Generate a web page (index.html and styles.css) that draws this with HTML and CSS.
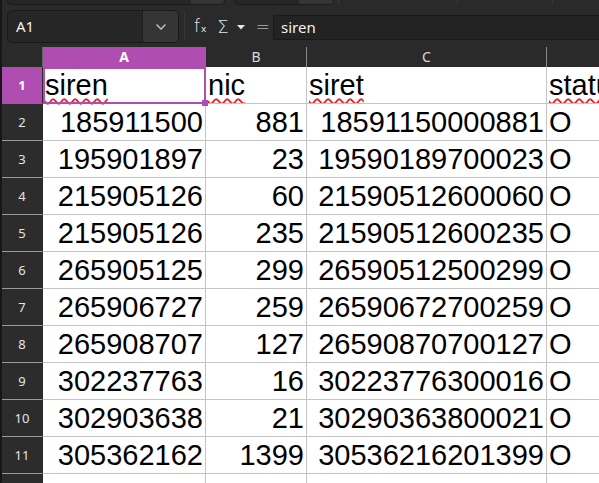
FILE: index.html
```html
<!DOCTYPE html>
<html>
<head>
<meta charset="utf-8">
<link rel="stylesheet" href="styles.css">
</head>
<body>
<div class="app">
  <div class="edge"></div>
  <div class="main">
    <div class="strip">
      <div class="tab tab1"><div class="tabseg seg1"></div></div>
      <div class="tab tab2"><div class="tabseg seg2"></div></div>
      <div class="vsep s1"></div>
      <div class="vsep s2"></div>
      <div class="vsep s3"></div>
    </div>
    <div class="toolbar">
      <div class="namebox">
        <span class="nametext">A1</span>
        <span class="namedrop">
          <svg width="12" height="8" viewBox="0 0 12 8"><path d="M1.5 1.5 L6 6 L10.5 1.5" fill="none" stroke="#c8c8c8" stroke-width="1.3"/></svg>
        </span>
      </div>
      <div class="tsep"></div>
      <div class="icons">
        <span class="fx">f<span class="fxsub">x</span></span>
        <span class="sigma">Σ</span>
        <svg class="tri" width="8" height="5" viewBox="0 0 8 5"><path d="M0 0 L8 0 L4 4.5 Z" fill="#e6e6e6"/></svg>
        <span class="eq">=</span>
      </div>
      <div class="formula">siren</div>
    </div>
    <div class="sheet">
      <div class="hrow">
        <div class="corner"></div>
        <div class="ch ca sel">A</div>
        <div class="ch cb">B</div>
        <div class="ch cc">C</div>
        <div class="ch cd"></div>
      </div>
      <div class="row">
        <div class="rh selrh">1</div>
        <div class="c ca txt cur"><span class="sp">siren</span><span class="handle"></span></div>
        <div class="c cb txt"><span class="sp">nic</span></div>
        <div class="c cc txt"><span class="sp">siret</span></div>
        <div class="c cd txt"><span class="sp">statut</span></div>
      </div>
      <div class="row"><div class="rh">2</div><div class="c ca num">185911500</div><div class="c cb num">881</div><div class="c cc num">18591150000881</div><div class="c cd txt">O</div></div>
      <div class="row"><div class="rh">3</div><div class="c ca num">195901897</div><div class="c cb num">23</div><div class="c cc num">19590189700023</div><div class="c cd txt">O</div></div>
      <div class="row"><div class="rh">4</div><div class="c ca num">215905126</div><div class="c cb num">60</div><div class="c cc num">21590512600060</div><div class="c cd txt">O</div></div>
      <div class="row"><div class="rh">5</div><div class="c ca num">215905126</div><div class="c cb num">235</div><div class="c cc num">21590512600235</div><div class="c cd txt">O</div></div>
      <div class="row"><div class="rh">6</div><div class="c ca num">265905125</div><div class="c cb num">299</div><div class="c cc num">26590512500299</div><div class="c cd txt">O</div></div>
      <div class="row"><div class="rh">7</div><div class="c ca num">265906727</div><div class="c cb num">259</div><div class="c cc num">26590672700259</div><div class="c cd txt">O</div></div>
      <div class="row"><div class="rh">8</div><div class="c ca num">265908707</div><div class="c cb num">127</div><div class="c cc num">26590870700127</div><div class="c cd txt">O</div></div>
      <div class="row"><div class="rh">9</div><div class="c ca num">302237763</div><div class="c cb num">16</div><div class="c cc num">30223776300016</div><div class="c cd txt">O</div></div>
      <div class="row"><div class="rh">10</div><div class="c ca num">302903638</div><div class="c cb num">21</div><div class="c cc num">30290363800021</div><div class="c cd txt">O</div></div>
      <div class="row"><div class="rh">11</div><div class="c ca num">305362162</div><div class="c cb num">1399</div><div class="c cc num">30536216201399</div><div class="c cd txt">O</div></div>
      <div class="row"><div class="rh"></div><div class="c ca num"></div><div class="c cb num"></div><div class="c cc num"></div><div class="c cd txt"></div></div>
    </div>
  </div>
</div>
</body>
</html>
```
FILE: styles.css
```css
html, body {
  margin: 0;
  padding: 0;
  background: #2a2a2a;
  overflow: hidden;
}
.app {
  width: 599px;
  height: 483px;
  display: flex;
  overflow: hidden;
}
.edge {
  width: 2px;
  flex: none;
  background: #1b151b;
}
.main {
  flex: 1;
  min-width: 0;
  display: flex;
  flex-direction: column;
}
.strip {
  height: 5px;
  display: flex;
  flex: none;
}
.tab {
  height: 4px;
  border: 1px solid #1c1c1c;
  border-top: none;
  border-radius: 0 0 5px 5px;
  background: #262626;
  display: flex;
  justify-content: flex-end;
  overflow: hidden;
}
.tab1 { margin-left: 5px; width: 216px; }
.tab2 { margin-left: 9px; width: 98px; }
.tabseg { height: 100%; background: #353535; }
.seg1 { width: 33px; }
.seg2 { width: 34px; }
.vsep { width: 1px; height: 5px; background: #383838; }
.s1 { margin-left: 4px; }
.s2 { margin-left: 118px; }
.s3 { margin-left: 94px; }

.toolbar {
  margin-top: 5px;
  height: 33px;
  display: flex;
  align-items: center;
  flex: none;
}
.namebox {
  margin-left: 5px;
  width: 170px;
  height: 31px;
  border: 1px solid #1a1a1a;
  border-radius: 5px;
  background: #262626;
  display: flex;
  overflow: hidden;
  flex: none;
}
.nametext {
  flex: 1;
  padding-left: 8px;
  font-family: "Noto Sans", sans-serif;
  font-size: 15px;
  line-height: 31px;
  color: #f2f2f2;
}
.namedrop {
  width: 35px;
  background: #353535;
  border-left: 1px solid #1e1e1e;
  display: flex;
  align-items: center;
  justify-content: center;
}
.tsep {
  width: 1px;
  height: 27px;
  margin-left: 5px;
  background: #363636;
  flex: none;
}
.icons {
  display: flex;
  align-items: center;
  margin-left: 9px;
  width: 79px;
  flex: none;
  color: #e6e6e6;
  font-family: "DejaVu Sans", sans-serif;
}
.fx {
  font-family: "DejaVu Sans", sans-serif;
  font-size: 17px;
  font-weight: 200;
  margin-top: -1px;
}
.fxsub {
  font-size: 9px;
  margin-left: 1px;
  font-weight: 400;
}
.sigma {
  margin-left: 11px;
  font-size: 18px;
  font-weight: 200;
  margin-top: -1px;
}
.tri { margin-left: 8px; margin-top: 2px; }
.eq {
  margin-left: 11px;
  font-size: 17px;
  font-weight: 200;
}
.formula {
  flex: 1;
  height: 23px;
  margin-top: 1px;
  border: 1px solid #1a1a1a;
  border-right: none;
  border-radius: 2px 0 0 2px;
  background: #232323;
  padding-left: 7px;
  font-family: "Noto Sans", sans-serif;
  font-size: 15px;
  line-height: 22px;
  color: #f2f2f2;
}

.sheet {
  margin-top: 4px;
  display: flex;
  flex-direction: column;
}
.hrow {
  height: 20px;
  display: flex;
  flex: none;
}
.corner {
  width: 40px;
  border-right: 1px solid #5e6a5e;
  flex: none;
}
.ch {
  flex: none;
  box-sizing: border-box;
  border-right: 1px solid #8a8a8a;
  text-align: center;
  font-family: "Noto Sans", sans-serif;
  font-size: 14px;
  line-height: 20px;
  color: #dadada;
  background: #2a2a2a;
}
.ch.sel {
  background: #b04db0;
  color: #ffffff;
  font-weight: bold;
  border-right-color: #b04db0;
}
.ca { width: 163px; }
.cb { width: 101px; }
.cc { width: 240px; }
.cd { flex: 1; border-right: none; }

.row {
  height: 37px;
  display: flex;
  flex: none;
}
.rh {
  flex: none;
  box-sizing: border-box;
  border-right: 1px solid #2a2a2a;
  border-bottom: 1px solid #9a9a9a;
  background: #2c2c2c;
  width: 41px;
  text-align: center;
  font-family: "Noto Sans", sans-serif;
  font-size: 13px;
  line-height: 36px;
  color: #e4e4e4;
}
.rh.selrh {
  background: #b04db0;
  color: #ffffff;
  font-weight: bold;
  border-bottom-color: #b04db0;
}
.c {
  flex: none;
  box-sizing: border-box;
  border-right: 1px solid #c4c4c4;
  border-bottom: 1px solid #c4c4c4;
  background: #ffffff;
  font-family: "Liberation Sans", Arial, sans-serif;
  font-size: 29px;
  line-height: 36px;
  color: #000000;
  white-space: nowrap;
  overflow: hidden;
  position: relative;
}
.c.cd { flex: 1; border-right: none; }
.num { text-align: right; padding-right: 2px; }
.txt { text-align: left; padding-left: 2px; }
.sp {
  text-decoration: underline wavy #e8262b;
  text-decoration-thickness: 1.5px;
  text-underline-offset: 3px;
}
.cur {
  overflow: visible;
  outline: 2px solid #b04db0;
  outline-offset: -2px;
  z-index: 2;
}
.handle {
  position: absolute;
  right: -3px;
  bottom: -3px;
  width: 6px;
  height: 6px;
  background: #b04db0;
}
```
